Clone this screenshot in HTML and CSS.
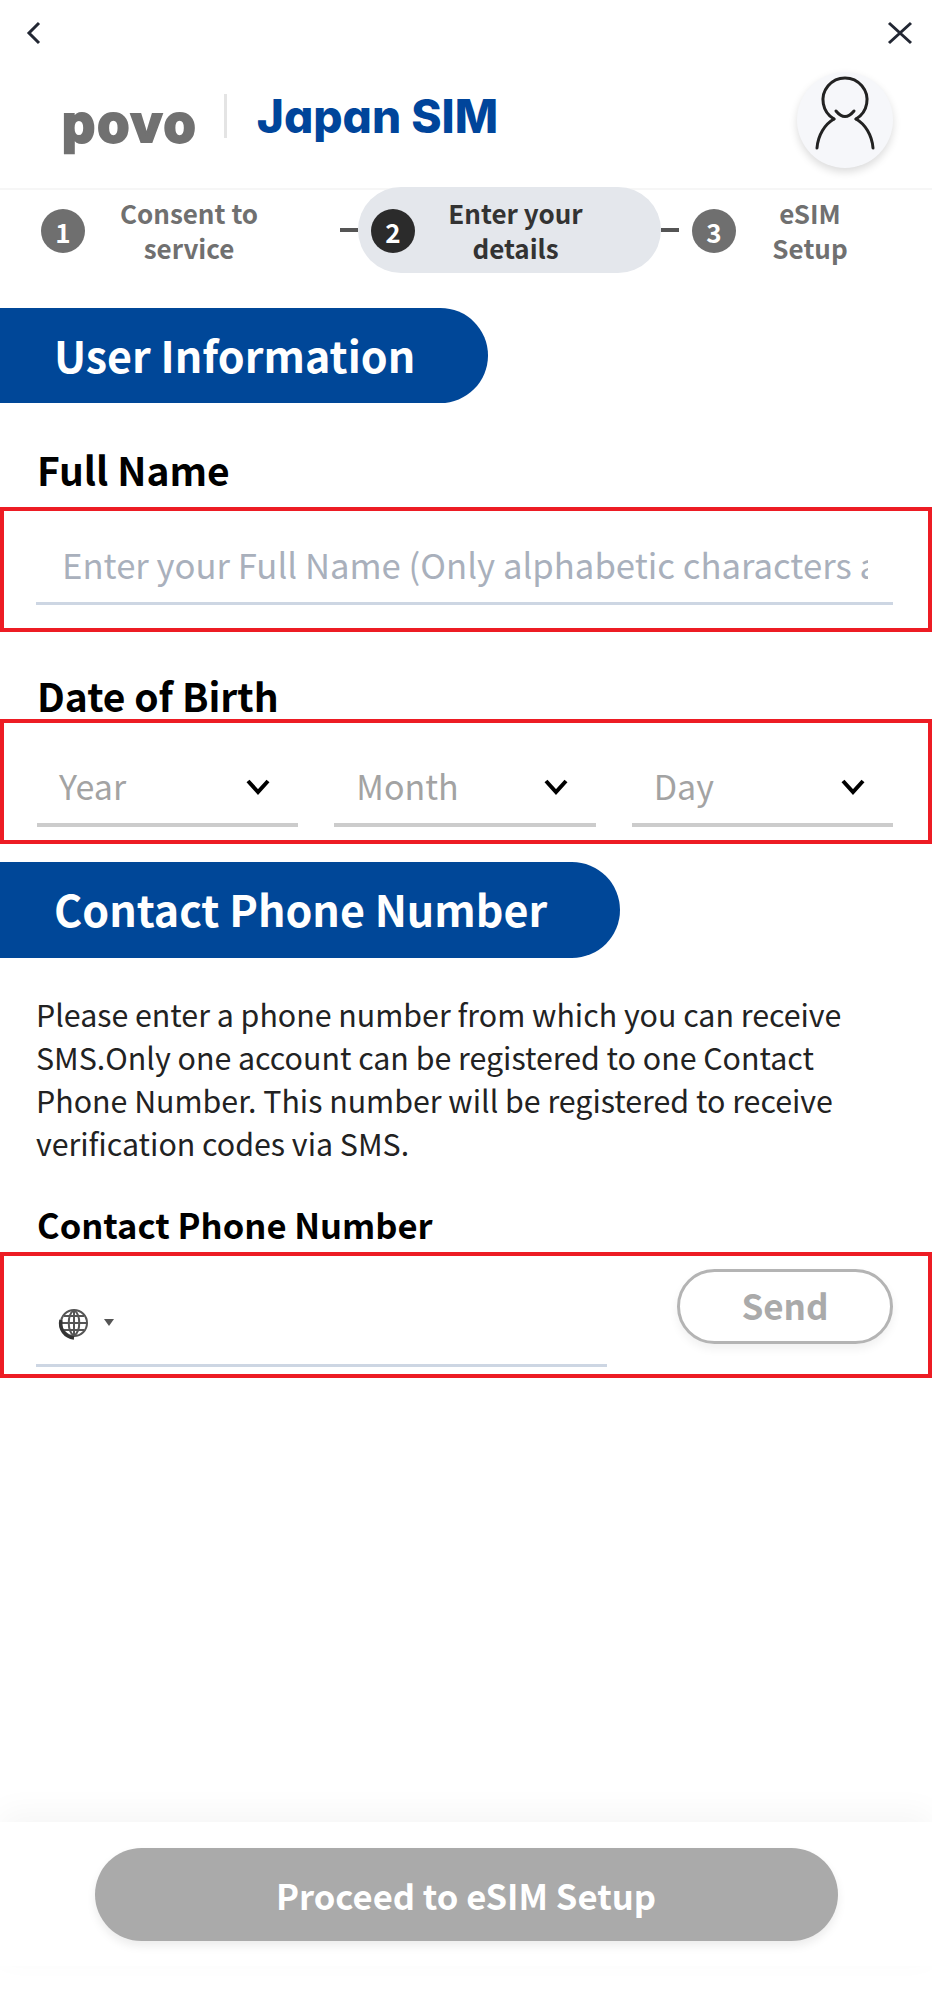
FILE: index.html
```html
<!DOCTYPE html>
<html lang="en">

<head>
    <meta charset="UTF-8">
    <meta name="viewport" content="width=device-width, initial-scale=1.0">
    <title>Japan SIM</title>
    <link rel="stylesheet" href="styles.css">
</head>

<body>
    <div class="page">
        <header class="header">
            <div class="nav-row">
                <svg class="nav-icon" viewBox="0 0 16 24"><path d="M13 2 L3 12 L13 22"/></svg>
                <svg class="nav-icon close-icon" viewBox="0 0 26 24"><path d="M2 2 L24 22 M24 2 L2 22"/></svg>
            </div>
            <div class="brand-row">
                <div class="brand">
                    <span class="povo">povo</span>
                    <span class="brand-sep"></span>
                    <span class="brand-name">Japan SIM</span>
                </div>
                <div class="avatar">
                    <svg viewBox="0 0 96 96">
                        <path d="M37 47 A22 22 0 1 1 59 47"/>
                        <path d="M37 47 C28 52 21 63 20 76"/>
                        <path d="M59 47 C68 52 75 63 76 76"/>
                        <path d="M39 39 Q48 50 57 39"/>
                    </svg>
                </div>
            </div>
        </header>

        <div class="stepper">
            <div class="step step-first">
                <span class="step-num">1</span>
                <span class="step-text">Consent to<br>service</span>
            </div>
            <span class="step-dash"></span>
            <div class="step step-active">
                <span class="step-num">2</span>
                <span class="step-text">Enter your<br>details</span>
            </div>
            <span class="step-dash"></span>
            <div class="step step-last">
                <span class="step-num">3</span>
                <span class="step-text">eSIM<br>Setup</span>
            </div>
        </div>

        <h2 class="banner banner-user">User Information</h2>

        <label class="field-label label-name" for="full-name">Full Name</label>
        <div class="red-box name-box">
            <input class="text-input" type="text" id="full-name" placeholder="Enter your Full Name (Only alphabetic characters and spaces)">
        </div>

        <div class="field-label label-birth">Date of Birth</div>
        <div class="red-box birth-box">
            <div class="select"><span>Year</span><svg viewBox="0 0 26 18"><path d="M3 3 L13 14 L23 3"/></svg></div>
            <div class="select"><span>Month</span><svg viewBox="0 0 26 18"><path d="M3 3 L13 14 L23 3"/></svg></div>
            <div class="select"><span>Day</span><svg viewBox="0 0 26 18"><path d="M3 3 L13 14 L23 3"/></svg></div>
        </div>

        <h2 class="banner banner-phone">Contact Phone Number</h2>

        <p class="phone-note">Please enter a phone number from which you can receive<br>SMS.Only one account can be registered to one Contact<br>Phone Number. This number will be registered to receive<br>verification codes via SMS.</p>

        <div class="field-label label-phone">Contact Phone Number</div>
        <div class="red-box phone-box">
            <div class="phone-field">
                <svg class="globe" viewBox="0 0 36 36">
                    <circle cx="18" cy="18" r="13"/>
                    <path d="M5 18 H31 M18 5 V31 M8 11 H28 M8 25 H28"/>
                    <path d="M18 5 C11 10 11 26 18 31 M18 5 C25 10 25 26 18 31"/>
                    <path class="globe-arc" d="M5 15 C3 24 9 32 18 33"/>
                </svg>
                <span class="caret"></span>
            </div>
            <button class="send-btn" type="button">Send</button>
        </div>

        <footer class="footer">
            <button class="proceed-btn" type="button">Proceed to eSIM Setup</button>
        </footer>
    </div>
</body>

</html>
```

FILE: styles.css
```css
body {
    font-family: "Noto Sans CJK JP", "Noto Sans", sans-serif;
    margin: 0;
    padding: 0;
    background-color: #fff;
    color: #000;
}

.page {
    display: flex;
    flex-direction: column;
    min-height: 2016px;
}

/* header */
.header {
    height: 190px;
    box-sizing: border-box;
    border-bottom: 2px solid #f6f6f6;
}

.nav-row {
    display: flex;
    justify-content: space-between;
    align-items: center;
    padding: 21px 19px 0 26px;
}

.nav-icon {
    width: 16px;
    height: 24px;
    fill: none;
    stroke: #222733;
    stroke-width: 3;
}

.close-icon {
    width: 26px;
}

.brand-row {
    display: flex;
    justify-content: space-between;
    align-items: center;
    padding: 27px 39px 0 62px;
}

.brand {
    display: flex;
    align-items: center;
    margin-top: -8px;
}

.povo {
    font-family: Inter, sans-serif;
    font-weight: 800;
    font-size: 52px;
    line-height: 60px;
    letter-spacing: 2px;
    color: #717171;
    -webkit-text-stroke: 2px #717171;
    margin-top: 16px;
}

.brand-sep {
    width: 3px;
    height: 44px;
    background-color: #e4e4e4;
    margin: 0 30px 0 26px;
}

.brand-name {
    font-family: Inter, sans-serif;
    font-feature-settings: "cv11";
    font-weight: 800;
    font-size: 46px;
    line-height: 50px;
    color: #00459b;
}

.avatar {
    width: 96px;
    height: 96px;
    border-radius: 50%;
    background-color: #f6f7fa;
    box-shadow: 0 4px 8px rgba(0, 0, 0, 0.14);
}

.avatar svg {
    width: 96px;
    height: 96px;
    fill: none;
    stroke: #222;
    stroke-width: 3;
    stroke-linecap: round;
}

/* stepper */
.stepper {
    display: flex;
    align-items: center;
    height: 86px;
    margin-top: -3px;
    font-size: 26px;
    font-weight: 700;
    line-height: 35px;
    color: #707070;
}

.step {
    display: flex;
    align-items: center;
    height: 86px;
    box-sizing: border-box;
}

.step-first {
    width: 340px;
    padding-left: 41px;
}

.step-active {
    width: 303px;
    padding-left: 13px;
    background-color: #e4e7ec;
    border-radius: 43px;
    color: #333;
}

.step-last {
    padding-left: 13px;
}

.step-num {
    display: flex;
    flex: none;
    justify-content: center;
    align-items: center;
    width: 44px;
    height: 44px;
    margin-top: 2px;
    border-radius: 50%;
    background-color: #6f6f6f;
    color: #fff;
    font-size: 26px;
    font-weight: 700;
}

.step-active .step-num {
    background-color: #2b2b2b;
}

.step-text {
    text-align: center;
    flex: 1;
    white-space: nowrap;
}

.step-first .step-text {
    padding-right: 47px;
}

.step-active .step-text {
    padding-right: 45px;
}

.step-last .step-text {
    width: 148px;
    padding-right: 0;
}

.step-dash {
    width: 18px;
    height: 4px;
    background-color: #555;
}

/* section banners */
.banner {
    display: flex;
    align-items: center;
    box-sizing: border-box;
    margin: 0;
    padding: 0 0 4px 54px;
    background-color: #004798;
    color: #fff;
    font-size: 43px;
    font-weight: 700;
    border-radius: 0 48px 48px 0;
}

.banner-user {
    width: 488px;
    height: 95px;
    margin-top: 35px;
}

.banner-phone {
    width: 620px;
    height: 96px;
    margin-top: 18px;
}

/* form */
.field-label {
    display: block;
    padding-left: 37px;
    font-size: 39px;
    font-weight: 700;
    line-height: 40px;
}

.label-name {
    margin-top: 46px;
}

.label-birth {
    margin-top: 43px;
}

.label-phone {
    margin-top: 39px;
    font-size: 34.5px;
}

.red-box {
    box-sizing: border-box;
    height: 125px;
    border: 4px solid #ed1c24;
}

.name-box {
    display: flex;
    align-items: flex-end;
    margin-top: 18px;
    padding: 0 35px 23px 32px;
}

.text-input {
    width: 100%;
    height: 70px;
    box-sizing: border-box;
    padding: 0 25px 10px 26px;
    border: none;
    border-bottom: 3px solid #cdd6e3;
    outline: none;
    background: transparent;
    font-family: inherit;
    font-size: 34.7px;
}

.text-input::placeholder {
    color: #a9b0bc;
    opacity: 1;
}

.birth-box {
    display: flex;
    gap: 36px;
    margin-top: 4px;
    padding: 0 35px 13px 33px;
    align-items: flex-end;
}

.select {
    display: flex;
    flex: 1;
    justify-content: space-between;
    align-items: center;
    height: 70px;
    box-sizing: border-box;
    padding: 0 27px 10px 22px;
    border-bottom: 4px solid #ccc;
    font-size: 34px;
    color: #a3a3a3;
}

.select svg {
    width: 26px;
    height: 18px;
    margin-top: 4px;
    fill: none;
    stroke: #000;
    stroke-width: 4;
}

.phone-note {
    margin: 35px 0 0;
    padding-left: 36px;
    font-size: 30.35px;
    line-height: 43px;
    color: #222;
}

.phone-box {
    display: flex;
    justify-content: space-between;
    align-items: flex-start;
    height: 126px;
    margin-top: 8px;
    padding: 13px 35px 0 32px;
}

.phone-field {
    display: flex;
    align-items: center;
    gap: 12px;
    width: 571px;
    height: 98px;
    box-sizing: border-box;
    padding: 12px 0 0 20px;
    border-bottom: 3px solid #cdd6e3;
}

.globe {
    width: 36px;
    height: 36px;
    fill: none;
    stroke: #555;
    stroke-width: 2;
}

.globe-arc {
    stroke: #333;
    stroke-width: 3.5;
}

.caret {
    width: 0;
    height: 0;
    border-left: 5px solid transparent;
    border-right: 5px solid transparent;
    border-top: 7px solid #555;
}

.send-btn {
    width: 216px;
    height: 75px;
    padding: 0 0 4px;
    border: 3px solid #b4b4b4;
    border-radius: 38px;
    background-color: #fff;
    box-shadow: 0 5px 10px rgba(0, 0, 0, 0.06);
    color: #aaa;
    font-family: inherit;
    font-size: 35px;
    font-weight: 700;
}

/* footer */
.footer {
    display: flex;
    justify-content: center;
    height: 144px;
    box-sizing: border-box;
    margin-top: auto;
    margin-bottom: 50px;
    padding-top: 26px;
    background-color: #fff;
    box-shadow: 0 -10px 30px rgba(0, 0, 0, 0.04);
}

.proceed-btn {
    width: 743px;
    height: 93px;
    border: none;
    border-radius: 47px;
    background-color: #aaa;
    box-shadow: 0 5px 10px rgba(0, 0, 0, 0.08);
    color: #fff;
    font-family: inherit;
    font-size: 34.6px;
    font-weight: 700;
}
```
